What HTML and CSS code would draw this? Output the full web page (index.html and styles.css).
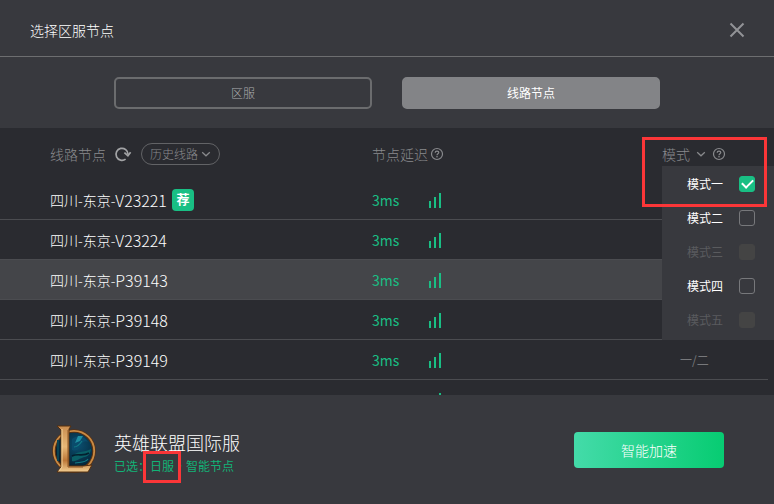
FILE: index.html
```html
<!DOCTYPE html>
<html lang="zh-CN">
<head>
<meta charset="utf-8">
<meta name="viewport" content="width=device-width, initial-scale=1">
<title>选择区服节点</title>
<link rel="stylesheet" href="styles.css">
</head>
<body>
<svg class="defs" aria-hidden="true">
  <symbol id="signal" viewBox="0 0 14 16">
    <path d="M1 9h2v7H1zM6 5h2v11H6zM11 1h2v15h-2z" fill="currentColor"/>
  </symbol>
  <symbol id="help" viewBox="0 0 14 14">
    <circle cx="7" cy="7" r="5.5" fill="none" stroke="currentColor" stroke-width="1.2"/>
    <path d="M5.2 5.8c0-2.4 3.6-2.2 3.6-.2 0 1.2-1.8 1.2-1.8 2.6" fill="none" stroke="currentColor" stroke-width="1.2"/>
    <circle cx="7" cy="9.8" r=".8" fill="currentColor"/>
  </symbol>
  <symbol id="chevron" viewBox="0 0 10 10">
    <path d="M1.2 3.2 5 6.8l3.8-3.6" fill="none" stroke="currentColor" stroke-width="1.2"/>
  </symbol>
</svg>

<header class="header">
  <h1 class="title">选择区服节点</h1>
  <button class="close" type="button" aria-label="关闭">
    <svg width="16" height="16" viewBox="0 0 16 16"><path d="M1.5 1.5l13 13M14.5 1.5l-13 13" stroke="currentColor" stroke-width="2" fill="none"/></svg>
  </button>
</header>

<nav class="tabs">
  <button class="tab" type="button">区服</button>
  <button class="tab active" type="button">线路节点</button>
</nav>

<main class="list">
  <table class="nodes">
    <colgroup><col class="col-node"><col class="col-delay"><col class="col-mode"></colgroup>
    <thead>
      <tr>
        <th scope="col">
          <div class="cell">
            <span>线路节点</span>
            <button class="refresh" type="button" aria-label="刷新">
              <svg width="18" height="16" viewBox="0 0 18 16"><path d="M11.6 13.1A6 6 0 1 1 14 8.2" fill="none" stroke="currentColor" stroke-width="1.7"/><path d="M10.4 6.7l3.5 3 2.7-3.5" fill="none" stroke="currentColor" stroke-width="1.7"/></svg>
            </button>
            <button class="history" type="button">历史线路<svg width="10" height="10"><use href="#chevron"/></svg></button>
          </div>
        </th>
        <th scope="col"><div class="cell tight">节点延迟<svg width="14" height="14"><use href="#help"/></svg></div></th>
        <th scope="col"><div class="cell mode-head">模式<svg width="10" height="10"><use href="#chevron"/></svg><svg width="14" height="14"><use href="#help"/></svg></div></th>
      </tr>
    </thead>
    <tbody>
      <tr><td><div class="cell name">四川-东京-<span class="code">V23221</span><span class="badge">荐</span></div></td><td><div class="cell delay"><span class="ms">3ms</span><svg width="14" height="16"><use href="#signal"/></svg></div></td><td></td></tr>
      <tr><td><div class="cell name">四川-东京-<span class="code">V23224</span></div></td><td><div class="cell delay"><span class="ms">3ms</span><svg width="14" height="16"><use href="#signal"/></svg></div></td><td></td></tr>
      <tr class="current"><td><div class="cell name">四川-东京-<span class="code">P39143</span></div></td><td><div class="cell delay"><span class="ms">3ms</span><svg width="14" height="16"><use href="#signal"/></svg></div></td><td></td></tr>
      <tr><td><div class="cell name">四川-东京-<span class="code">P39148</span></div></td><td><div class="cell delay"><span class="ms">3ms</span><svg width="14" height="16"><use href="#signal"/></svg></div></td><td></td></tr>
      <tr><td><div class="cell name">四川-东京-<span class="code">P39149</span></div></td><td><div class="cell delay"><span class="ms">3ms</span><svg width="14" height="16"><use href="#signal"/></svg></div></td><td class="mode">一/二</td></tr>
      <tr><td></td><td><div class="cell delay"><span class="ms"></span><svg width="14" height="16"><use href="#signal"/></svg></div></td><td class="mode">一/三</td></tr>
    </tbody>
  </table>
  <div class="menu">
    <label class="option">模式一<input type="checkbox" checked></label>
    <label class="option">模式二<input type="checkbox"></label>
    <label class="option off">模式三<input type="checkbox" disabled></label>
    <label class="option">模式四<input type="checkbox"></label>
    <label class="option off">模式五<input type="checkbox" disabled></label>
  </div>
  <div class="mark mark-mode"></div>
</main>

<footer class="footer">
  <svg class="logo" width="46" height="50" viewBox="0 0 46 50" aria-hidden="true">
    <defs>
      <linearGradient id="gold" x1="0" y1="0" x2="0" y2="1"><stop offset="0" stop-color="#c98d50"/><stop offset=".45" stop-color="#e8b877"/><stop offset=".75" stop-color="#bd7838"/><stop offset="1" stop-color="#f3cf93"/></linearGradient>
      <radialGradient id="sea" cx=".6" cy=".35" r=".7"><stop offset="0" stop-color="#0b4f70"/><stop offset=".6" stop-color="#062f45"/><stop offset="1" stop-color="#04131f"/></radialGradient>
    </defs>
    <circle cx="23" cy="26" r="20" fill="url(#sea)" stroke="#5a3213" stroke-width="3.6"/>
    <circle cx="23" cy="26" r="20.2" fill="none" stroke="#c98b45" stroke-width="1.8"/>
    <path d="M21 14c6-5 13-3 16 3-4-2-6 1-8 5s-5 4-8 3z" fill="#0a4c6c"/>
    <path d="M27 11l5 0-3 5-5 2z" fill="#1f8fa2"/>
    <path d="M21 32c5-7 12-4 19-8-1 8-5 7-9 9-4 1-6 4-10 3z" fill="#0a5f66"/>
    <path d="M21 31c6-3 11 1 17-3" fill="none" stroke="#04202f" stroke-width="1.6"/>
    <path d="M23 22c4 0 6-3 8-6M24 38c5-1 10 0 13-4" fill="none" stroke="#117b86" stroke-width="1.2"/>
    <path d="M7 15v21" stroke="#0a4352" stroke-width="2"/>
    <path d="M6 1h14l-2 3v37h14l9-1-4 7H6l4-5V5z" fill="url(#gold)" stroke="#57300f" stroke-width="1"/>
    <path d="M11 4v38l-3 4" fill="none" stroke="#f4d49b" stroke-width="1"/>
    <path d="M17 5v37h15" fill="none" stroke="#8c5525" stroke-width="1"/>
  </svg>
  <div class="game">
    <h2 class="game-name">英雄联盟国际服</h2>
    <p class="picked"><span>已选：</span><span class="region">日服<span class="mark mark-region"></span></span><span class="dot">·</span><span>智能节点</span></p>
  </div>
  <button class="boost" type="button">智能加速</button>
</footer>
</body>
</html>
```
FILE: styles.css
```css
* { box-sizing: border-box; }

body {
  margin: 0;
  height: 100vh;
  display: flex;
  flex-direction: column;
  background: #38393e;
  color: #fff;
  font: 300 14px/20px "Noto Sans CJK SC", "Noto Sans", sans-serif;
}

button {
  padding: 0;
  border: 0;
  background: none;
  color: inherit;
  font: inherit;
}

svg { display: block; flex: none; }
.defs { position: absolute; width: 0; height: 0; }

.header {
  height: 57px;
  display: flex;
  align-items: center;
  justify-content: space-between;
  padding: 4px 29px 0 30px;
  border-bottom: 1px solid #6d6e70;
}
.title { margin: 0; font-size: 14px; font-weight: 300; }
.close { color: #929396; }

.tabs {
  display: grid;
  grid-template-columns: 1fr 1fr;
  gap: 30px;
  padding: 20px 114px 19px;
}
.tab {
  height: 32px;
  border: 2px solid #6b6c6e;
  border-radius: 5px;
  color: #acadaf;
  font-size: 12px;
}
.tab.active { background: #838487; border-color: #838487; color: #fff; font-weight: 400; }

.list {
  position: relative;
  flex: 1 1 0;
  min-height: 0;
  overflow: hidden;
  background: #2a2b30;
}
.nodes {
  width: calc(100% - 6px);
  table-layout: fixed;
  border-collapse: separate;
  border-spacing: 0;
}
.col-delay { width: 290px; }
.col-mode { width: 106px; }

th {
  height: 52px;
  padding: 0;
  color: #898a8d;
  font-weight: 300;
  text-align: left;
}
td { height: 40px; padding: 0; border-bottom: 1px solid #4b4c50; }
th:first-child, td:first-child { padding-left: 50px; }
.current td { background: #444549; }

.cell { display: flex; align-items: center; }
.tight { gap: 2px; }
.mode-head { gap: 6px; }
.refresh { margin: 0 9px 0 8px; color: #a3a4a6; }
.history {
  height: 22px;
  display: flex;
  align-items: center;
  gap: 3px;
  padding: 0 8px;
  border: 1px solid #626366;
  border-radius: 11px;
  font-size: 12px;
}

.name { color: #fff; }
.code { font-size: 16px; }
.badge {
  width: 22px;
  height: 22px;
  margin-left: 5px;
  border-radius: 4px;
  background: #19bf84;
  color: #fff;
  font-size: 13px;
  font-weight: 700;
  text-align: center;
}
.delay { color: #19bf84; }
.ms { width: 56px; font-weight: 400; }
.mode { padding-left: 18px; color: #77787b; font-size: 12px; font-weight: 400; }

.menu {
  position: absolute;
  top: 38px;
  right: 0;
  width: 112px;
  padding: 1px 0 3px;
  background: #38393e;
}
.option {
  height: 34px;
  display: flex;
  align-items: center;
  gap: 16px;
  padding-left: 25px;
  font-size: 12px;
  font-weight: 400;
}
.option.off { color: #5a5b5e; }
.option input {
  appearance: none;
  display: grid;
  place-items: center;
  width: 16px;
  height: 16px;
  margin: 0;
  border: 1px solid #77787b;
  border-radius: 3px;
}
.option input:checked { border-color: #19bf84; background: #19bf84; }
.option input:checked::before {
  content: "";
  width: 9px;
  height: 5px;
  margin-bottom: 3px;
  border: solid #fff;
  border-width: 0 0 2px 2px;
  transform: rotate(-45deg);
}
.option input:disabled { border-color: #444444; background: #444444; }

.mark { position: absolute; border: 3px solid #fb3638; pointer-events: none; }
.mark-mode { top: 9px; right: 7px; width: 125px; height: 70px; }
.mark-region { top: -5px; left: -7px; width: 38px; height: 32px; }

.footer {
  height: 109px;
  display: flex;
  align-items: center;
  padding: 0 50px 0 51px;
}
.game { flex: 1; padding: 4px 0 0 17px; }
.game-name { margin: 0; font-size: 18px; line-height: 28px; font-weight: 300; }
.picked { display: flex; margin: 0; color: #12b377; font-size: 12px; font-weight: 400; }
.region { position: relative; }
.dot { width: 12px; text-align: center; }
.boost {
  width: 150px;
  height: 36px;
  border-radius: 4px;
  background: linear-gradient(90deg, #44dba9, #07cc72);
}
```
